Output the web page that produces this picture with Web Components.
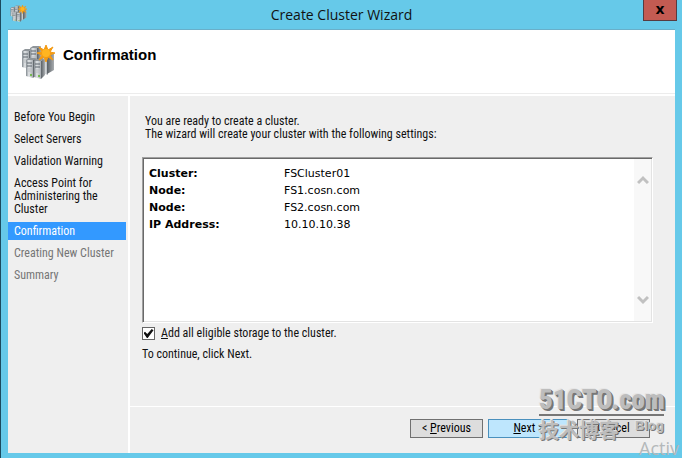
<!DOCTYPE html>
<html lang="en">
<head>
<meta charset="utf-8">
<title>Create Cluster Wizard</title>
<style>
    html, body {
        height: 100%;
        margin: 0;
    }
    body {
        position: relative;
        overflow: hidden;
        font: 12px/13px "Roboto Condensed", "Liberation Sans", sans-serif;
        color: #111;
    }
    u {
        text-underline-offset: 1px;
    }
</style>
</head>
<body>
<wizard-window caption="Create Cluster Wizard">
    <wizard-header slot="header">Confirmation</wizard-header>
    <wizard-steps slot="steps">
        <wizard-step>Before You Begin</wizard-step>
        <wizard-step>Select Servers</wizard-step>
        <wizard-step>Validation Warning</wizard-step>
        <wizard-step>Access Point for Administering the Cluster</wizard-step>
        <wizard-step current>Confirmation</wizard-step>
        <wizard-step pending>Creating New Cluster</wizard-step>
        <wizard-step pending>Summary</wizard-step>
    </wizard-steps>
    <wizard-page></wizard-page>
    <wizard-button slot="buttons">&lt; <u>P</u>revious</wizard-button>
    <wizard-button slot="buttons" primary><u>N</u>ext &gt;</wizard-button>
    <wizard-button slot="buttons" last>Cancel</wizard-button>
</wizard-window>
<activate-note>Activ</activate-note>
<blog-mark></blog-mark>

<script>
class ClusterIcon extends HTMLElement {
    constructor() {
        super();
        this.attachShadow({mode: 'open'});
        this.shadowRoot.innerHTML = `
            <style>
                :host {
                    display: block;
                    flex: none;
                }
                svg {
                    display: block;
                    width: 100%;
                    height: 100%;
                }
            </style>
            <svg viewBox="0 0 34 34" aria-hidden="true">
                <defs>
                    <linearGradient id="front">
                        <stop offset="0" stop-color="#82898f"/>
                        <stop offset="0.4" stop-color="#e2e5e7"/>
                        <stop offset="1" stop-color="#a6abb0"/>
                    </linearGradient>
                    <linearGradient id="side">
                        <stop offset="0" stop-color="#5a6065"/>
                        <stop offset="1" stop-color="#a9adb0"/>
                    </linearGradient>
                    <g id="server">
                        <path d="M0 2L3 0H11L7 2Z" fill="#8f959a"/>
                        <path d="M7 2L11 0V16L7 20Z" fill="url(#side)"/>
                        <path d="M0 2H7V20L0 18Z" fill="url(#front)"/>
                        <path d="M1 5H6M1 8H6" stroke="#5c646c"/>
                        <path d="M1 11H6M1 13H5" stroke="#b8bcc0"/>
                        <circle cx="5" cy="17" r="1" fill="#5cb52a"/>
                    </g>
                </defs>
                <path d="M21 12H27V30L21 28Z" fill="url(#front)"/>
                <path d="M26 12L33 8V25L26 29Z" fill="url(#side)"/>
                <use href="#server" x="1" y="4"/>
                <use href="#server" x="9" y="1"/>
                <use href="#server" x="5" y="13"/>
                <use href="#server" x="13" y="14"/>
                <path d="M25 0L27 5L32 2L29 7L34 8L29 10L32 15L27 12L25 17L23 12L18 15L21 10L16 8L21 7L18 2L23 5Z" fill="#f39a13" stroke="#f39a13"/>
                <circle cx="25" cy="8" r="4" fill="#ffb521"/>
            </svg>
        `;
    }
}
customElements.define('cluster-icon', ClusterIcon);

class WizardWindow extends HTMLElement {
    constructor() {
        super();
        this.attachShadow({mode: 'open'});
        this.shadowRoot.innerHTML = `
            <style>
                :host {
                    display: flex;
                    flex-flow: column;
                    box-sizing: border-box;
                    height: 100vh;
                    padding: 0 7px 5px;
                    border-left: 1px solid #1b4a5e;
                    background: #66c9e9;
                }
                .titlebar {
                    display: grid;
                    grid-template-columns: 36px 1fr 36px;
                    height: 29px;
                    border-bottom: 1px solid #69afc9;
                }
                .titlebar cluster-icon {
                    width: 17px;
                    height: 17px;
                    margin: 5px 0 0 2px;
                }
                h1 {
                    margin: 0;
                    font: 14px/29px "Open Sans", sans-serif;
                    text-align: center;
                }
                .close {
                    justify-self: end;
                    width: 34px;
                    height: 21px;
                    margin-right: -2px;
                    padding: 0 0 2px;
                    border: 1px solid #573b40;
                    border-top: 0;
                    background: #c35b52;
                    color: #000;
                    font: bold 14px/18px "DejaVu Sans", sans-serif;
                }
                .client {
                    flex: 1;
                    display: grid;
                    grid-template-rows: auto 1fr;
                    grid-template-columns: 120px 1fr;
                    column-gap: 2px;
                    background: #fff;
                }
                slot[name="header"] {
                    display: block;
                    grid-column: 1 / -1;
                }
                .main {
                    display: flex;
                    flex-flow: column;
                    min-width: 0;
                    background: #efefef;
                }
                .content {
                    flex: 1;
                }
                footer {
                    display: flex;
                    justify-content: flex-end;
                    gap: 5px;
                    padding: 12px 25px 15px;
                    border-top: 1px solid #fff;
                }
            </style>
            <div class="titlebar">
                <cluster-icon></cluster-icon>
                <h1></h1>
                <button class="close" aria-label="Close">x</button>
            </div>
            <div class="client">
                <slot name="header"></slot>
                <slot name="steps"></slot>
                <div class="main">
                    <div class="content"><slot></slot></div>
                    <footer><slot name="buttons"></slot></footer>
                </div>
            </div>
        `;
    }

    connectedCallback() {
        this.shadowRoot.querySelector('h1').textContent = this.getAttribute('caption');
    }
}
customElements.define('wizard-window', WizardWindow);

class WizardHeader extends HTMLElement {
    constructor() {
        super();
        this.attachShadow({mode: 'open'});
        this.shadowRoot.innerHTML = `
            <style>
                :host {
                    display: flex;
                    align-items: flex-start;
                    gap: 8px;
                    height: 48px;
                    padding: 15px 13px 0;
                    border-bottom: 1px solid #ececec;
                    margin-bottom: 2px;
                }
                cluster-icon {
                    width: 34px;
                    height: 34px;
                }
                h2 {
                    margin: 0;
                    color: #000;
                    font: bold 15px/20px "Liberation Sans", Arial, sans-serif;
                }
            </style>
            <cluster-icon></cluster-icon>
            <h2><slot></slot></h2>
        `;
    }
}
customElements.define('wizard-header', WizardHeader);

class WizardSteps extends HTMLElement {
    constructor() {
        super();
        this.attachShadow({mode: 'open'});
        this.shadowRoot.innerHTML = `
            <style>
                :host {
                    display: block;
                    padding: 12px 2px 0 0;
                    background: #efefef;
                }
                nav {
                    display: flex;
                    flex-flow: column;
                    gap: 4px;
                }
            </style>
            <nav><slot></slot></nav>
        `;
    }
}
customElements.define('wizard-steps', WizardSteps);

class WizardStep extends HTMLElement {
    constructor() {
        super();
        this.attachShadow({mode: 'open'});
        this.shadowRoot.innerHTML = `
            <style>
                :host {
                    display: block;
                }
                a {
                    display: block;
                    padding: 3px 20px 2px 6px;
                    color: inherit;
                    text-decoration: none;
                }
                :host([current]) {
                    background: #3399ff;
                    color: #fff;
                }
                :host([pending]) {
                    color: #767676;
                }
                :host([pending]) a {
                    padding-right: 0;
                }
            </style>
            <a href="#"><slot></slot></a>
        `;
    }
}
customElements.define('wizard-step', WizardStep);

class WizardPage extends HTMLElement {
    constructor() {
        super();
        this.attachShadow({mode: 'open'});
        this.shadowRoot.innerHTML = `
            <style>
                :host {
                    display: block;
                    padding: 19px 22px 0 12px;
                }
                p {
                    margin: 0;
                }
                .intro {
                    padding: 0 3px;
                }
                .report {
                    display: flex;
                    justify-content: space-between;
                    box-sizing: border-box;
                    height: 166px;
                    margin: 16px 0 4px;
                    border: 1px solid;
                    border-color: #a0a0a0 #fff #fff #a0a0a0;
                    background: #fff;
                    box-shadow: inset 1px 1px #696969, inset -1px -1px #e3e3e3;
                }
                table {
                    align-self: flex-start;
                    margin: 7px 6px;
                    border-collapse: collapse;
                    color: #000;
                    font: 11px/17px "DejaVu Sans", Verdana, sans-serif;
                }
                th {
                    width: 135px;
                    padding: 0;
                    text-align: left;
                }
                td {
                    padding: 0;
                }
                .scroll {
                    display: flex;
                    flex-flow: column;
                    justify-content: space-between;
                    align-items: center;
                    width: 17px;
                    margin: 1px;
                    padding: 16px 0;
                    box-sizing: border-box;
                    background: #f8f8f8;
                }
                .scroll svg {
                    width: 12px;
                    height: 10px;
                    fill: none;
                    stroke: #c1c1c1;
                    stroke-width: 3;
                }
                label {
                    display: flex;
                    align-items: center;
                    gap: 6px;
                    margin-bottom: 8px;
                }
                input {
                    appearance: none;
                    display: grid;
                    place-items: center;
                    width: 13px;
                    height: 13px;
                    margin: 0;
                    border: 1px solid #666;
                    background: #fff;
                }
                input:checked::before {
                    content: "";
                    width: 10px;
                    height: 9px;
                    background: #111;
                    clip-path: polygon(0 45%, 15% 30%, 38% 55%, 82% 0, 100% 15%, 42% 100%, 34% 100%);
                }
                u {
                    text-underline-offset: 1px;
                }
            </style>
            <p class="intro">You are ready to create a cluster.<br>The wizard will create your cluster with the following settings:</p>
            <div class="report">
                <table>
                    <tr><th scope="row">Cluster:</th><td>FSCluster01</td></tr>
                    <tr><th scope="row">Node:</th><td>FS1.cosn.com</td></tr>
                    <tr><th scope="row">Node:</th><td>FS2.cosn.com</td></tr>
                    <tr><th scope="row">IP Address:</th><td>10.10.10.38</td></tr>
                </table>
                <div class="scroll">
                    <svg viewBox="0 0 12 10"><path d="M1 8L6 3L11 8"/></svg>
                    <svg viewBox="0 0 12 10"><path d="M1 2L6 7L11 2"/></svg>
                </div>
            </div>
            <label for="storage"><input type="checkbox" id="storage" checked><span><u>A</u>dd all eligible storage to the cluster.</span></label>
            <p>To continue, click Next.</p>
        `;
    }
}
customElements.define('wizard-page', WizardPage);

class WizardButton extends HTMLElement {
    constructor() {
        super();
        this.attachShadow({mode: 'open'});
        this.shadowRoot.innerHTML = `
            <style>
                :host {
                    display: block;
                }
                :host([last]) {
                    margin-left: 3px;
                }
                button {
                    display: block;
                    width: 73px;
                    height: 19px;
                    padding: 0;
                    border: 1px solid #707070;
                    background: #dddddd;
                    color: #000;
                    font: inherit;
                }
                :host([primary]) button {
                    width: 81px;
                    border-color: #4a90bd;
                    background: #bee6fd;
                }
            </style>
            <button type="button"><slot></slot></button>
        `;
    }
}
customElements.define('wizard-button', WizardButton);

class BlogMark extends HTMLElement {
    constructor() {
        super();
        this.attachShadow({mode: 'open'});
        this.shadowRoot.innerHTML = `
            <style>
                /* floats over the window corner */
                :host {
                    position: absolute;
                    right: 18px;
                    bottom: 15px;
                    width: 125px;
                    color: #bdbdbd;
                    text-shadow: 1px 1px #777, 2px 2px #777, -1px -1px #e6e6e6;
                    pointer-events: none;
                }
                .site {
                    border-bottom: 2px solid #777;
                    font: 900 27px/28px "Roboto Condensed", "Liberation Sans", sans-serif;
                    white-space: nowrap;
                }
                .sub {
                    display: flex;
                    justify-content: space-between;
                    align-items: flex-start;
                    font: bold 20px/27px "Noto Sans CJK SC", sans-serif;
                    text-shadow: 1px 1px #777, -1px -1px #e6e6e6;
                }
                .blog {
                    font: bold 13px/20px "Liberation Sans", sans-serif;
                }
            </style>
            <div class="site">51CTO.com</div>
            <div class="sub"><span>技术博客</span><span class="blog">Blog</span></div>
        `;
    }
}
customElements.define('blog-mark', BlogMark);

class ActivateNote extends HTMLElement {
    constructor() {
        super();
        this.attachShadow({mode: 'open'});
        this.shadowRoot.innerHTML = `
            <style>
                /* desktop notice in the screen corner */
                :host {
                    position: absolute;
                    right: 0;
                    bottom: 0;
                    width: 43px;
                    color: #b4b8ba;
                    font: 18px/20px "Open Sans", sans-serif;
                    white-space: nowrap;
                }
            </style>
            <slot></slot>
        `;
    }
}
customElements.define('activate-note', ActivateNote);
</script>
</body>
</html>
